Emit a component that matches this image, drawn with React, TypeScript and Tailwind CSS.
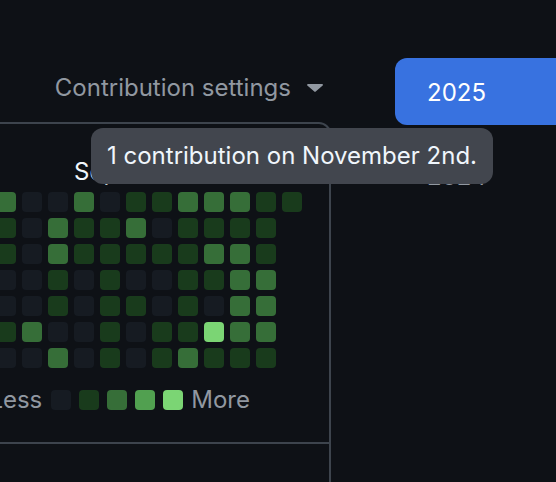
import React from "react";

const levelClass: Record<number, string> = {
  0: "bg-[#161b22]",
  1: "bg-[#193b1c]",
  2: "bg-[#366e38]",
  3: "bg-[#51a050]",
  4: "bg-[#7bd574]",
};

// rows are Sun..Sat, columns are weeks (last week only has Sunday)
const rows: (number | null)[][] = [
  [2, 0, 0, 2, 0, 1, 1, 2, 2, 2, 1, 1],
  [1, 0, 2, 1, 1, 2, 0, 1, 1, 1, 1, null],
  [1, 0, 2, 1, 1, 1, 1, 1, 2, 2, 1, null],
  [0, 0, 1, 0, 1, 0, 0, 1, 1, 2, 2, null],
  [0, 0, 1, 0, 1, 1, 0, 1, 0, 2, 2, null],
  [1, 2, 0, 0, 1, 0, 1, 1, 4, 2, 2, null],
  [0, 0, 2, 0, 1, 0, 1, 2, 1, 1, 1, null],
];

const weeks = rows[0].map((_, c) => rows.map((r) => r[c]));

const months: Record<number, string> = { 3: "Sep", 7: "Oct", 11: "Nov" };

const Caret = () => (
  <svg width="16" height="8" viewBox="0 0 16 8" className="fill-[#9198a1]">
    <path d="M1 0h14c.8 0 1.2.9.7 1.5L8.7 7.6a1 1 0 0 1-1.4 0L.3 1.5C-.2.9.2 0 1 0z" />
  </svg>
);

const App = () => {
  return (
    <div className="relative w-[556px] h-[482px] overflow-hidden bg-[#0e1116] flex font-['Inter',sans-serif]">
      {/* graph column */}
      <div className="w-[331px] shrink-0 flex flex-col">
        <div className="flex justify-end pt-[70px] pr-[8px] mb-[16px]">
          <div className="flex items-center gap-[16px] h-[36px] text-[24px] text-[#9198a1]">
            <span>Contribution settings</span>
            <Caret />
          </div>
        </div>

        <div className="border-2 border-l-0 border-[#3d444d] rounded-tr-[12px] overflow-hidden pt-[36px] pb-[30px]">
          <div className="flex justify-end pr-[27px]">
            <div className="flex flex-col gap-[8px]">
              <div className="flex gap-[6px] h-[24px]">
                {weeks.map((_, c) => (
                  <div key={c} className="w-[20px] shrink-0 text-[24px] leading-[24px] text-[#f0f6fc] whitespace-nowrap">
                    {months[c] ?? ""}
                  </div>
                ))}
              </div>
              <div className="flex gap-[6px]">
                {weeks.map((week, c) => (
                  <div key={c} className="flex flex-col gap-[6px]">
                    {week.map((lvl, r) =>
                      lvl === null ? null : (
                        <div key={r} className={`w-[20px] h-[20px] rounded-[4px] ${levelClass[lvl]}`} />
                      )
                    )}
                  </div>
                ))}
              </div>
            </div>
          </div>

          <div className="flex justify-end items-center gap-[8px] pr-[79px] mt-[20px] h-[24px] text-[24px] text-[#9198a1]">
            <span className="mr-[1px]">Less</span>
            {[0, 1, 2, 3, 4].map((l) => (
              <div key={l} className={`w-[20px] h-[20px] rounded-[4px] shrink-0 ${levelClass[l]}`} />
            ))}
            <span>More</span>
          </div>
        </div>

        <div className="flex-1 border-r-2 border-[#3d444d]" />
      </div>

      {/* year list */}
      <div className="ml-[64px] pt-[58px] flex flex-col gap-[17px]">
        <div className="w-[200px] h-[67px] rounded-[12px] bg-[#3872e0] flex items-center pl-[32px] pt-[2px] text-[24px] text-white">
          2025
        </div>
        <div className="w-[200px] h-[67px] flex items-center pl-[32px] pt-[2px] text-[24px] text-[#9198a1]">
          2024
        </div>
      </div>

      {/* tooltip */}
      <div className="absolute left-[91px] top-[128px] h-[56px] px-[16px] flex items-center rounded-[12px] bg-[#42464e] text-[24px] text-[#f0f6fc] whitespace-nowrap">
        1 contribution on November 2nd.
      </div>
    </div>
  );
};

export default App;
